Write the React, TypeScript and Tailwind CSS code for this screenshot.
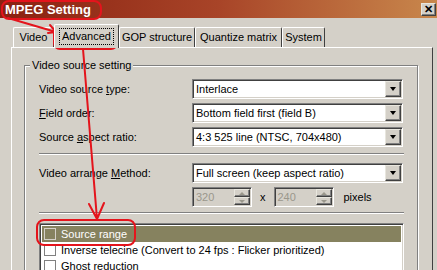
import React from "react";

const sunken =
  "border border-t-[#808080] border-l-[#808080] border-b-white border-r-white shadow-[inset_1px_1px_0_#404040,inset_-1px_-1px_0_#d4d0c8]";
const raised =
  "border border-t-[#e8e6de] border-l-[#e8e6de] border-b-[#404040] border-r-[#404040] shadow-[inset_-1px_-1px_0_#808080]";

const Combo: React.FC<{ value: string }> = ({ value }) => (
  <div className={`w-[211px] h-[20px] bg-white flex items-center ${sunken}`}>
    <span className="flex-1 pl-[3px] truncate">{value}</span>
    <div className={`w-[16px] h-[16px] mr-[1px] bg-[#d4d0c8] flex items-center justify-center ${raised}`}>
      <div className="w-0 h-0 border-l-[3px] border-r-[3px] border-t-[4px] border-l-transparent border-r-transparent border-t-black" />
    </div>
  </div>
);

const Spin: React.FC<{ value: string }> = ({ value }) => (
  <div className={`w-[60px] h-[20px] bg-[#d4d0c8] flex items-center ${sunken}`}>
    <span className="flex-1 pl-[3px] text-[#9a978c]">{value}</span>
    <div className="w-[16px] h-[16px] mr-[1px] flex flex-col">
      <div className={`flex-1 bg-[#d4d0c8] flex items-center justify-center ${raised}`}>
        <div className="w-0 h-0 border-l-[3px] border-r-[3px] border-b-[3px] border-l-transparent border-r-transparent border-b-[#9a978c]" />
      </div>
      <div className={`flex-1 bg-[#d4d0c8] flex items-center justify-center ${raised}`}>
        <div className="w-0 h-0 border-l-[3px] border-r-[3px] border-t-[3px] border-l-transparent border-r-transparent border-t-[#9a978c]" />
      </div>
    </div>
  </div>
);

const Row: React.FC<{ label: React.ReactNode; value: string }> = ({ label, value }) => (
  <div className="flex items-center h-[20px]">
    <span className="w-[153px]">{label}</span>
    <Combo value={value} />
  </div>
);

const Etched = () => (
  <div className="w-[365px] h-[2px] border-t border-t-[#808080] border-b border-b-white" />
);

const tabs = [
  { name: "Video", w: "w-[41px]" },
  { name: "Advanced", w: "w-[65px]", active: true },
  { name: "GOP structure", w: "w-[76px]" },
  { name: "Quantize matrix", w: "w-[87px]" },
  { name: "System", w: "w-[43px]" },
];

const items = [
  "Source range",
  "Inverse telecine (Convert to 24 fps : Flicker prioritized)",
  "Ghost reduction",
];

export default function App() {
  return (
    <div className="relative w-[437px] h-[270px] overflow-hidden bg-[#d4d0c8] text-black text-[11px] leading-none font-['Liberation_Sans',Arial,sans-serif]">
      <div className="h-[18px] flex items-center justify-between bg-gradient-to-r from-[#8a2010] via-[#a84428] to-[#c8874c]">
        <span className="pl-[5px] text-white font-bold text-[13px]">MPEG Setting</span>
        <div className={`w-[15px] h-[13px] mr-[1px] bg-[#d4d0c8] flex items-center justify-center font-bold text-[11px] ${raised}`}>
          ✕
        </div>
      </div>

      <div className="pl-[11px] pr-[4px]">
        <div className="flex items-end h-[29px] pl-[2px] whitespace-nowrap">
          {tabs.map((t) =>
            t.active ? (
              <div
                key={t.name}
                className={`${t.w} h-[24px] -mb-[1px] z-10 bg-[#d4d0c8] border-t border-l border-white border-r border-r-[#404040] rounded-t-[2px] flex items-center justify-center`}
              >
                <span className="border border-dotted border-black px-[2px] py-[2px]">{t.name}</span>
              </div>
            ) : (
              <div
                key={t.name}
                className={`${t.w} h-[20px] bg-[#d4d0c8] border-t border-l border-white border-r border-r-[#404040] rounded-t-[2px] flex items-center justify-center`}
              >
                {t.name}
              </div>
            )
          )}
        </div>

        <div className="h-[230px] border-t border-l border-white border-r border-r-[#404040] pl-[12px] pt-[17px]">
          <div className="relative w-[394px] h-[220px] border border-[#808080] shadow-[1px_1px_0_white,inset_1px_1px_0_white] pl-[14px] pt-[13px]">
            <span className="absolute -top-[6px] left-[5px] px-[2px] bg-[#d4d0c8]">Video source setting</span>
            <div className="flex flex-col gap-[4px]">
              <Row label={<>Video source <u>t</u>ype:</>} value="Interlace" />
              <Row label={<><u>F</u>ield order:</>} value="Bottom field first (field B)" />
              <Row label={<>Source <u>a</u>spect ratio:</>} value="4:3 525 line (NTSC, 704x480)" />
            </div>
            <div className="mt-[6px] mb-[8px]">
              <Etched />
            </div>
            <Row label={<>Video arrange <u>M</u>ethod:</>} value="Full screen (keep aspect ratio)" />
            <div className="flex items-center mt-[4px] pl-[153px]">
              <Spin value="320" />
              <span className="px-[8px]">x</span>
              <Spin value="240" />
              <span className="pl-[10px]">pixels</span>
            </div>
            <div className="mt-[5px] mb-[9px]">
              <Etched />
            </div>
            <div className={`w-[365px] h-[60px] bg-white p-[2px] ${sunken}`}>
              {items.map((it, i) => (
                <div
                  key={it}
                  className={`h-[16px] flex items-center gap-[5px] pl-[2px] ${i === 0 ? "bg-[#86825f] text-white" : ""}`}
                >
                  <div className={`w-[12px] h-[12px] border ${i === 0 ? "border-[#d4d0c8]" : "bg-white border-[#808080]"}`} />
                  <span>{it}</span>
                </div>
              ))}
            </div>
          </div>
        </div>
      </div>

      <svg className="absolute inset-0 pointer-events-none" width="437" height="270" fill="none" stroke="#e4141c" strokeWidth="2" strokeLinecap="round">
        <rect x="2" y="1" width="99" height="18" rx="7" />
        <rect x="54" y="25" width="63" height="24" rx="6" />
        <path d="M8 18 L56 32 M50 25 L56 32 L48 33" />
        <path d="M83 49 Q90 130 97 219 M89 204 L97 219 M104 203 L97 219" />
        <rect x="37" y="220" width="98" height="25" rx="7" />
      </svg>
    </div>
  );
}
